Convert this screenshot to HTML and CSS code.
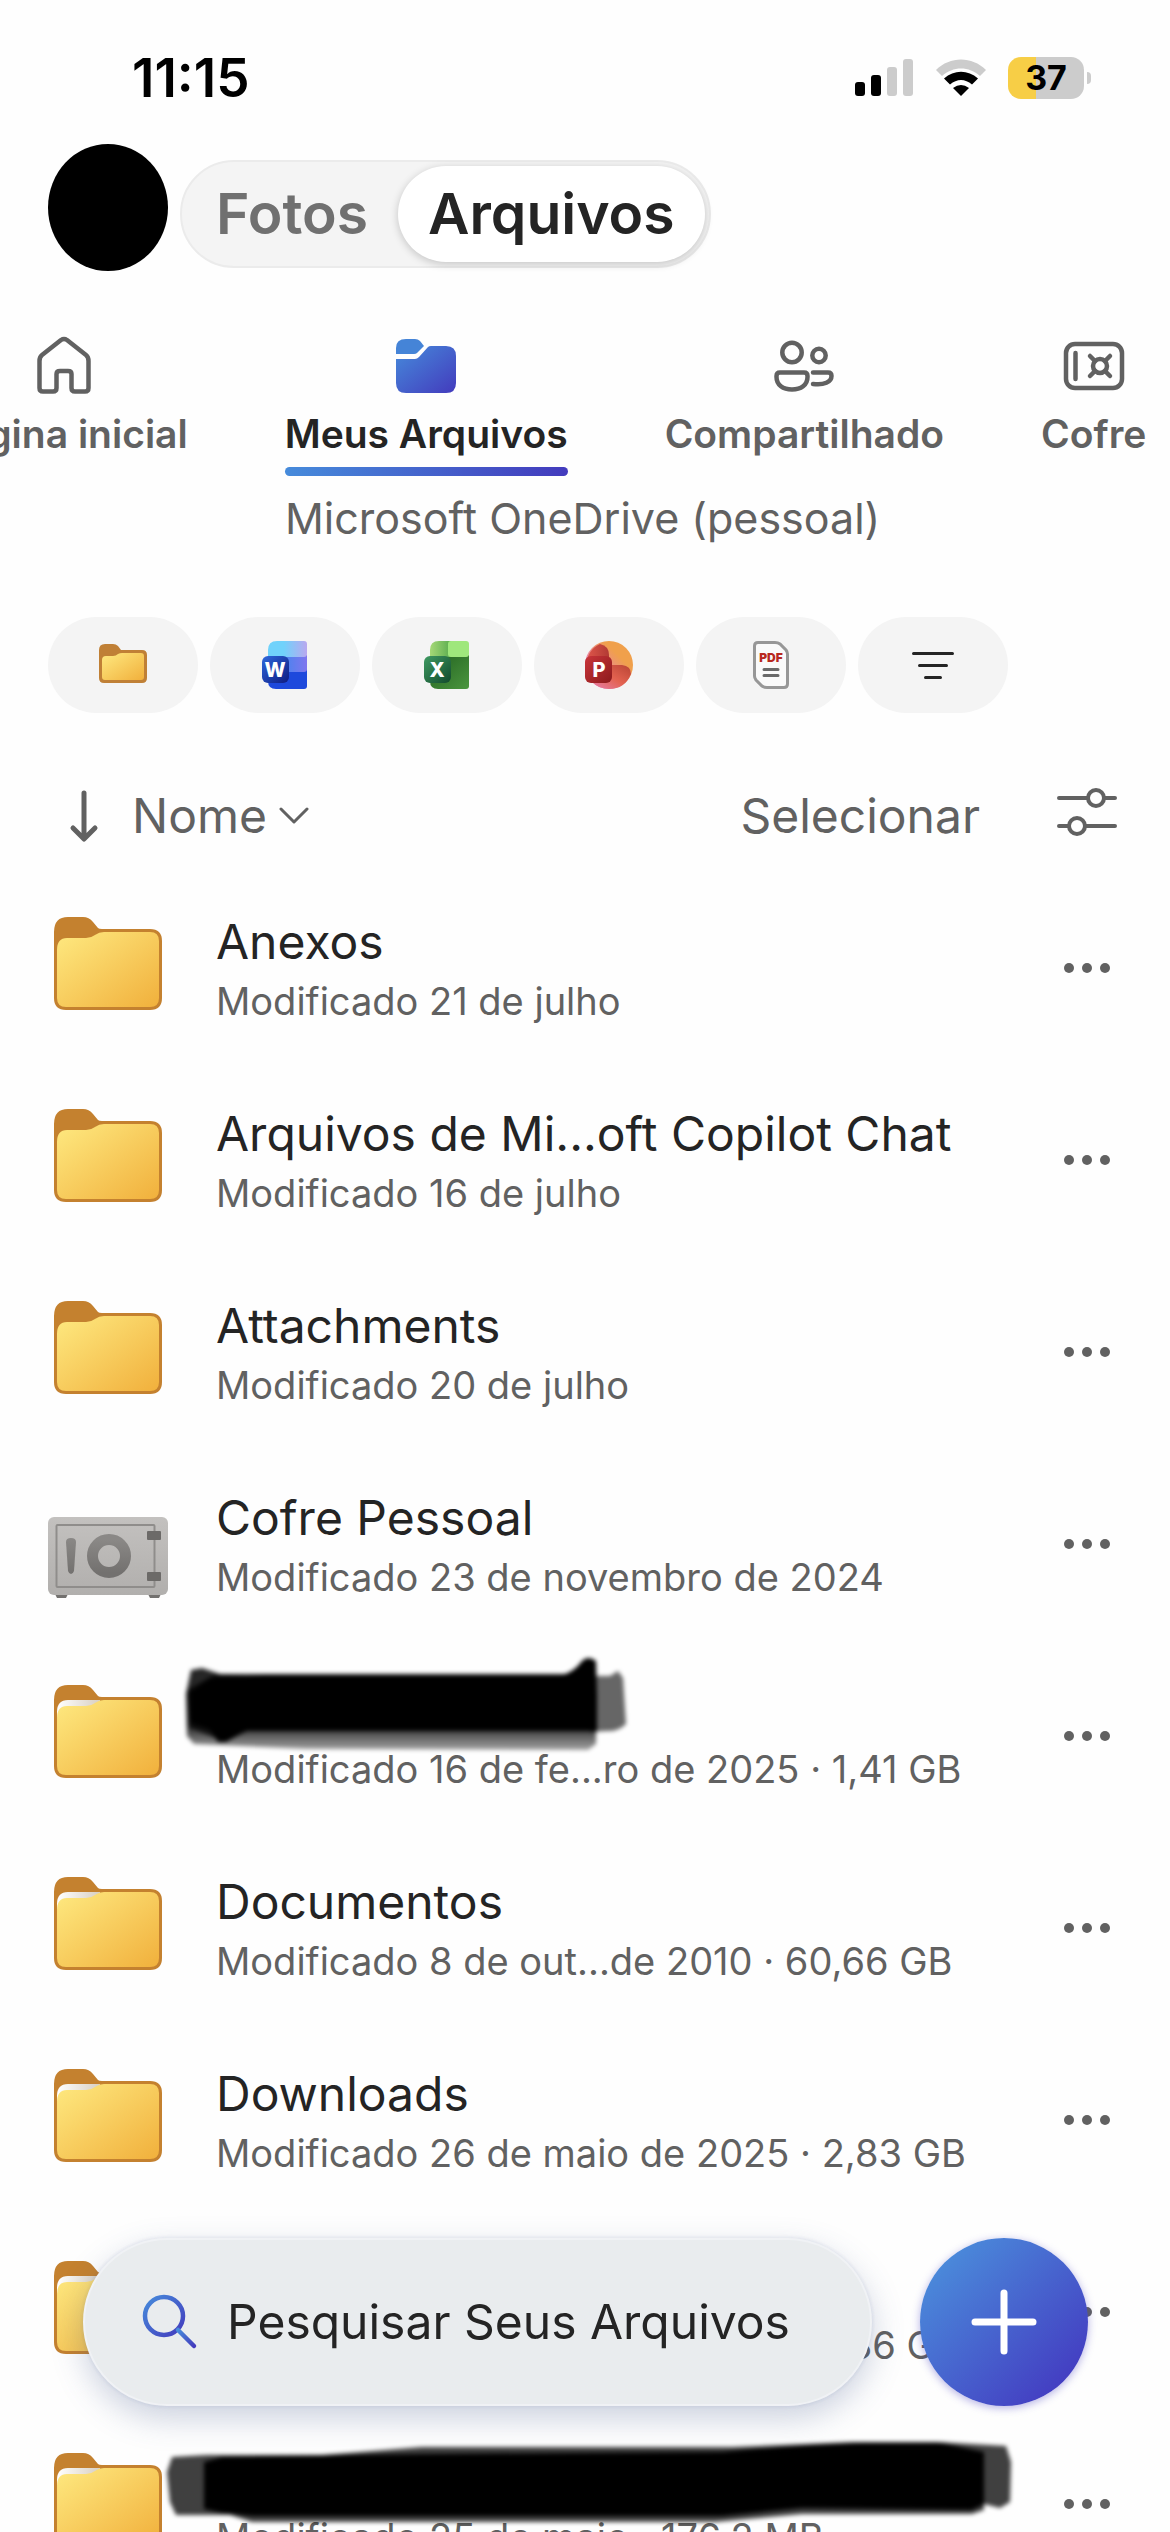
FILE: index.html
```html
<!DOCTYPE html>
<html lang="pt-br">
<head>
    <meta charset="UTF-8">
    <meta name="viewport" content="width=device-width, initial-scale=1.0">
    <title>Meus Arquivos</title>
    <link rel="stylesheet" href="styles.css">
</head>
<body>
    <!-- Formas reutilizadas -->
    <svg class="defs" aria-hidden="true">
        <defs>
            <linearGradient id="azul" x1="0" y1="0" x2="1" y2="1">
                <stop offset="0" stop-color="#468bdb"/>
                <stop offset="1" stop-color="#433bbd"/>
            </linearGradient>
            <linearGradient id="amarelo" x1="0" y1="0" x2="1" y2="1">
                <stop offset="0" stop-color="#fee980"/>
                <stop offset="1" stop-color="#f1b03c"/>
            </linearGradient>
            <linearGradient id="papel" x1="0" y1="0" x2="1" y2="0">
                <stop offset="0" stop-color="#fff"/>
                <stop offset="1" stop-color="#d8cfc2"/>
            </linearGradient>
            <linearGradient id="cinza" x1="0" y1="0" x2="0" y2="1">
                <stop offset="0" stop-color="#c3c1bf"/>
                <stop offset="1" stop-color="#b1afad"/>
            </linearGradient>
            <linearGradient id="cinzaEscuro" x1="0" y1="0" x2="0" y2="1">
                <stop offset="0" stop-color="#8a8886"/>
                <stop offset="1" stop-color="#73716f"/>
            </linearGradient>
            <linearGradient id="sombraRisco" x1="0" y1="0" x2="0" y2="1">
                <stop offset=".7" stop-color="#000" stop-opacity=".85"/>
                <stop offset="1" stop-color="#000" stop-opacity=".35"/>
            </linearGradient>
            <filter id="borrado" x="-5%" y="-20%" width="110%" height="140%">
                <feGaussianBlur stdDeviation="2"/>
            </filter>
        </defs>
        <symbol id="pasta" viewBox="0 0 120 120">
            <path fill="#c4812f" d="M6 24Q6 9 20 9H35Q41 9 45 14L50 20Q51 21 54 21H102Q114 21 114 33V90Q114 102 102 102H18Q6 102 6 90Z"/>
            <path fill="url(#amarelo)" d="M9 42Q9 30 19 30H38Q43 30 47 27Q51 24 56 24H102Q111 24 111 33V90Q111 99 102 99H18Q9 99 9 90Z"/>
        </symbol>
        <symbol id="pastaCheia" viewBox="0 0 120 120">
            <path fill="#c4812f" d="M6 24Q6 9 20 9H35Q41 9 45 14L50 20Q51 21 54 21H102Q114 21 114 33V90Q114 102 102 102H18Q6 102 6 90Z"/>
            <path fill="url(#papel)" d="M9 36Q9 24 20 24H52V44H9Z"/>
            <path fill="url(#amarelo)" d="M9 42Q9 30 19 30H38Q43 30 47 27Q51 24 56 24H102Q111 24 111 33V90Q111 99 102 99H18Q9 99 9 90Z"/>
        </symbol>
        <symbol id="mais" viewBox="0 0 48 12">
            <circle cx="6" cy="6" r="5"/><circle cx="24" cy="6" r="5"/><circle cx="42" cy="6" r="5"/>
        </symbol>
    </svg>

    <div class="app">
        <div class="status">
            <span class="hora">11:15</span>
            <div class="status-icones">
                <svg width="60" height="38" viewBox="0 0 60 38">
                    <rect x="1" y="23" width="10" height="14" rx="3"/>
                    <rect x="17" y="16" width="10" height="21" rx="3"/>
                    <rect x="33" y="8" width="10" height="29" rx="3" fill="#ccc"/>
                    <rect x="49" y="0" width="10" height="37" rx="3" fill="#ccc"/>
                </svg>
                <svg width="52" height="38" viewBox="0 0 52 38">
                    <path d="M1 11C15-3 37-3 51 11L45 17C34 7 18 7 7 17Z" fill="#ccc"/>
                    <path d="M9 19.500C19 10.500 33 10.500 43 19.500L37 25.500C30 19.500 22 19.500 15 25.500Z"/>
                    <path d="M18 29Q26 23 34 29L26 37Z"/>
                </svg>
                <div class="bateria"><span>37</span></div>
            </div>
        </div>

        <header class="cabecalho">
            <button class="avatar" aria-label="Conta"></button>
            <div class="segmento">
                <button class="segmento-item">Fotos</button>
                <button class="segmento-item ativo">Arquivos</button>
            </div>
        </header>

        <nav class="abas">
            <a class="aba" href="#">
                <svg class="aba-icone" viewBox="0 0 72 72">
                    <path d="M33 10L14 25Q11.500 27 11.500 31V58Q11.500 61.500 15 61.500H25Q28.500 61.500 28.500 58V44Q28.500 41 32 41H40Q43.500 41 43.500 44V58Q43.500 61.500 47 61.500H57Q60.500 61.500 60.500 58V31Q60.500 27 58 25L39 10Q36 8 33 10Z"/>
                </svg>
                <span>Página inicial</span>
            </a>
            <a class="aba ativa" href="#" aria-current="page">
                <svg class="aba-icone cheio" viewBox="0 0 72 72">
                    <path fill="#4584d7" d="M6 18Q6 9 16 9H25Q28 9 30 11L34 16L27 23Q26 24 24 24H6Z"/>
                    <path fill="url(#azul)" d="M6 29H25Q27 29 29 27L38 17Q39 16 41 16H56Q66 16 66 26V53Q66 63 56 63H16Q6 63 6 53Z"/>
                </svg>
                <span>Meus Arquivos</span>
            </a>
            <a class="aba" href="#">
                <svg class="aba-icone" viewBox="0 0 72 72">
                    <circle cx="24" cy="22.500" r="9.700"/>
                    <circle cx="51" cy="25.500" r="6.700"/>
                    <path d="M12 42.500H36Q39.500 42.500 39.500 46V47C39.500 55 33 59.500 24 59.500S8.500 55 8.500 47V46Q8.500 42.500 12 42.500Z"/>
                    <path d="M45 42.500H60Q63.500 42.500 63.500 46C63.500 52 56 55.500 45 54"/>
                </svg>
                <span>Compartilhado</span>
            </a>
            <a class="aba" href="#">
                <svg class="aba-icone" viewBox="0 0 72 72">
                    <rect x="8" y="14" width="56" height="44" rx="9"/>
                    <path d="M17.500 23V49M32 26L37 31M52 26L47 31M32 46L37 41M52 46L47 41"/>
                    <circle cx="42" cy="36" r="7"/>
                </svg>
                <span>Cofre</span>
            </a>
        </nav>
        <div class="conta">Microsoft OneDrive (pessoal)</div>

        <div class="filtros">
            <button class="filtro" aria-label="Pastas">
                <svg viewBox="0 0 48 48">
                    <path fill="#c08036" d="M0 9Q0 3 6 3H14Q17 3 19 5L22 9H43Q48 9 48 14V37Q48 42 43 42H5Q0 42 0 37Z"/>
                    <path fill="url(#amarelo)" d="M3 19Q3 15 7 15H14Q17 15 19 13Q21 12 23 12H42Q45 12 45 15V36Q45 39 42 39H6Q3 39 3 36Z"/>
                </svg>
            </button>
            <button class="filtro" aria-label="Word">
                <svg viewBox="0 0 48 48">
                    <defs>
                        <linearGradient id="w1"><stop offset=".4" stop-color="#70d2fb"/><stop offset="1" stop-color="#b9a8ef"/></linearGradient>
                        <linearGradient id="w2"><stop offset=".3" stop-color="#3f86ee"/><stop offset="1" stop-color="#8076ee"/></linearGradient>
                        <linearGradient id="w3" x1="0" y1="0" x2="1" y2="1"><stop offset="0" stop-color="#2d68dc"/><stop offset="1" stop-color="#0f1a80"/></linearGradient>
                    </defs>
                    <path fill="#1e49dc" d="M7 16H46V45Q46 48 43 48H15Q7 48 7 40Z"/>
                    <path fill="url(#w2)" d="M7 14H46V28Q46 31 43 31H7Z"/>
                    <path fill="url(#w1)" d="M7 9Q7 0 16 0H43Q46 0 46 3V13Q46 16 43 16H7Z"/>
                    <rect x="1" y="15" width="27" height="27" rx="6" fill="url(#w3)"/>
                    <text class="letra" x="14" y="36">W</text>
                </svg>
            </button>
            <button class="filtro" aria-label="Excel">
                <svg viewBox="0 0 48 48">
                    <defs>
                        <linearGradient id="x1"><stop offset="0" stop-color="#a5d877"/><stop offset="1" stop-color="#54a94b"/></linearGradient>
                        <linearGradient id="x2" x1="0" y1="0" x2="1" y2="1"><stop offset="0" stop-color="#22601f"/><stop offset="1" stop-color="#4b963f"/></linearGradient>
                        <linearGradient id="x3" x1="0" y1="0" x2="1" y2="1"><stop offset="0" stop-color="#3f9a62"/><stop offset="1" stop-color="#124a2c"/></linearGradient>
                    </defs>
                    <path fill="url(#x2)" d="M7 14H46V45Q46 48 43 48H15Q7 48 7 40Z"/>
                    <path fill="url(#x1)" d="M7 9Q7 0 16 0H30V16H7Z"/>
                    <rect x="25" y="0" width="21" height="16" rx="3" fill="#9fe77c"/>
                    <rect x="1" y="15" width="27" height="27" rx="6" fill="url(#x3)"/>
                    <text class="letra" x="14" y="36">X</text>
                </svg>
            </button>
            <button class="filtro" aria-label="PowerPoint">
                <svg viewBox="0 0 48 48">
                    <defs>
                        <linearGradient id="p1" x1="0" y1="1" x2="1" y2="0"><stop offset=".3" stop-color="#e77fb5"/><stop offset=".7" stop-color="#f0a04b"/></linearGradient>
                        <linearGradient id="p2" x1="0" y1="0" x2="1" y2="1"><stop offset="0" stop-color="#c9353a"/><stop offset="1" stop-color="#8c1a1c"/></linearGradient>
                        <linearGradient id="p3" x1="1" y1="0" x2="0" y2="1"><stop offset="0" stop-color="#b94434"/><stop offset=".5" stop-color="#e36250"/><stop offset="1" stop-color="#e67fae"/></linearGradient>
                        <linearGradient id="p4"><stop offset="0" stop-color="#e0574b"/><stop offset="1" stop-color="#b23a34"/></linearGradient>
                    </defs>
                    <circle cx="24" cy="24" r="24" fill="url(#p1)"/>
                    <path fill="url(#p3)" d="M24 24H37Q46 25 46 33Q40 48 24 48Q14 48 7 41L14 24Z"/>
                    <path fill="url(#p4)" d="M1 24Q3 8 15 3Q24 5 24 14V26H1Z"/>
                    <rect x="0" y="15" width="27" height="27" rx="6" fill="url(#p2)"/>
                    <text class="letra" x="14" y="36">P</text>
                </svg>
            </button>
            <button class="filtro" aria-label="PDF">
                <svg viewBox="0 0 48 48">
                    <path fill="#fafafa" stroke="#979797" stroke-width="3" d="M7.500 5Q7.500 1.500 11 1.500H28Q31 1.500 33 3L39 9Q40.500 11 40.500 13V43Q40.500 46.500 37 46.500H20Q17 46.500 15 45L9 39Q7.500 37 7.500 35Z"/>
                    <text class="letra-pdf" x="24" y="21">PDF</text>
                    <path stroke="#6a6a6a" stroke-width="3" stroke-linecap="round" d="M17 28.500H31M17 34.500H31"/>
                </svg>
            </button>
            <button class="filtro" aria-label="Mais filtros">
                <svg viewBox="0 0 48 48">
                    <path stroke="#242424" stroke-width="3" stroke-linecap="round" d="M4.500 12.500H43.500M10.500 24.500H37.500M16.500 36.500H31.500"/>
                </svg>
            </button>
        </div>

        <div class="ordenacao">
            <button class="ordenar">
                <svg width="72" height="60" viewBox="0 0 72 60">
                    <path class="traco" stroke-width="5" d="M36 7V52M25 42L36 53L47 42"/>
                </svg>
                Nome
                <svg width="30" height="24" viewBox="0 0 30 24">
                    <path class="traco" stroke-width="3" d="M2 5L15 18L28 5"/>
                </svg>
            </button>
            <button class="selecionar">Selecionar</button>
            <button class="ajustes" aria-label="Opções de exibição">
                <svg width="62" height="60" viewBox="0 0 62 60">
                    <path class="traco" stroke-width="4" d="M3 12H31M49 12H59M3 40H12M30 40H59"/>
                    <circle class="traco" stroke-width="4" cx="40" cy="12" r="8"/>
                    <circle class="traco" stroke-width="4" cx="21" cy="40" r="8"/>
                </svg>
            </button>
        </div>

        <ul class="lista">
            <li class="item">
                <svg class="item-icone"><use href="#pasta"/></svg>
                <div class="item-texto">
                    <div class="nome">Anexos</div>
                    <div class="detalhe">Modificado 21 de julho</div>
                </div>
                <button class="opcoes" aria-label="Opções"><svg><use href="#mais"/></svg></button>
            </li>
            <li class="item">
                <svg class="item-icone"><use href="#pasta"/></svg>
                <div class="item-texto">
                    <div class="nome">Arquivos de Mi...oft Copilot Chat</div>
                    <div class="detalhe">Modificado 16 de julho</div>
                </div>
                <button class="opcoes" aria-label="Opções"><svg><use href="#mais"/></svg></button>
            </li>
            <li class="item">
                <svg class="item-icone"><use href="#pasta"/></svg>
                <div class="item-texto">
                    <div class="nome">Attachments</div>
                    <div class="detalhe">Modificado 20 de julho</div>
                </div>
                <button class="opcoes" aria-label="Opções"><svg><use href="#mais"/></svg></button>
            </li>
            <li class="item">
                <svg class="item-icone" viewBox="0 0 120 120">
                    <path fill="#73716f" d="M7 110H20L18 114H9ZM100 110H113L111 114H102Z"/>
                    <rect x="0" y="33" width="120" height="78" rx="6" fill="url(#cinza)"/>
                    <rect x="8.500" y="41" width="98" height="62" rx="1" fill="none" stroke="#8f8d8b" stroke-width="2"/>
                    <path fill="url(#cinzaEscuro)" d="M18 58Q18 54 23 54T28 58L26 87Q25 90 23 90T20 87Z"/>
                    <circle cx="61" cy="72" r="16.500" fill="none" stroke="url(#cinzaEscuro)" stroke-width="11"/>
                    <rect x="99" y="47" width="14" height="9" rx="1" fill="#6c6a68"/>
                    <rect x="99" y="88" width="14" height="9" rx="1" fill="#6c6a68"/>
                </svg>
                <div class="item-texto">
                    <div class="nome">Cofre Pessoal</div>
                    <div class="detalhe">Modificado 23 de novembro de 2024</div>
                </div>
                <button class="opcoes" aria-label="Opções"><svg><use href="#mais"/></svg></button>
            </li>
            <li class="item">
                <svg class="item-icone"><use href="#pastaCheia"/></svg>
                <div class="item-texto">
                    <div class="nome"></div>
                    <div class="detalhe">Modificado 16 de fe...ro de 2025 · 1,41 GB</div>
                </div>
                <svg class="risco risco-curto" viewBox="0 0 440 96" aria-hidden="true">
                    <g filter="url(#borrado)">
                        <path fill="url(#sombraRisco)" d="M0 38L5 14L16 12L34 18H400L410 40V88L402 94L120 93L8 88L1 80Z"/>
                        <path opacity=".6" d="M404 20L424 20L432 15L437 22L440 68Q432 76 420 75L404 76Z"/>
                        <path opacity=".7" d="M1 34L30 18L60 20V76L34 84L4 72Z"/>
                        <path d="M24 22L80 19H376Q388 16 396 5Q402-1 410 5L411 40L411 75H60L40 86L32 86L24 74L4 66V36Z"/>
                    </g>
                </svg>
                <button class="opcoes" aria-label="Opções"><svg><use href="#mais"/></svg></button>
            </li>
            <li class="item">
                <svg class="item-icone"><use href="#pastaCheia"/></svg>
                <div class="item-texto">
                    <div class="nome">Documentos</div>
                    <div class="detalhe">Modificado 8 de out...de 2010 · 60,66 GB</div>
                </div>
                <button class="opcoes" aria-label="Opções"><svg><use href="#mais"/></svg></button>
            </li>
            <li class="item">
                <svg class="item-icone"><use href="#pastaCheia"/></svg>
                <div class="item-texto">
                    <div class="nome">Downloads</div>
                    <div class="detalhe">Modificado 26 de maio de 2025 · 2,83 GB</div>
                </div>
                <button class="opcoes" aria-label="Opções"><svg><use href="#mais"/></svg></button>
            </li>
            <li class="item">
                <svg class="item-icone"><use href="#pastaCheia"/></svg>
                <div class="item-texto">
                    <div class="nome">Imagens</div>
                    <div class="detalhe">Modificado 8 de out...de 2020 · 20,36 GB</div>
                </div>
                <button class="opcoes" aria-label="Opções"><svg><use href="#mais"/></svg></button>
            </li>
            <li class="item">
                <svg class="item-icone"><use href="#pastaCheia"/></svg>
                <div class="item-texto">
                    <div class="nome"></div>
                    <div class="detalhe">Modificado 25 de maio · 176,2 MB</div>
                </div>
                <svg class="risco risco-longo" viewBox="0 0 850 84" aria-hidden="true">
                    <g filter="url(#borrado)">
                        <path opacity=".75" d="M5 30L10 15L45 13H160L260 5H570L690 0H775L844 4L849 20L848 60L838 66L822 62V68L810 72H640L553 80H90L68 73L14 73L8 60Z"/>
                        <path d="M42 20L60 15L260 12L560 10Q640 3 700 1H780L822 10V62L810 68L640 66L560 74H90L60 71L42 67Z"/>
                    </g>
                </svg>
                <button class="opcoes" aria-label="Opções"><svg><use href="#mais"/></svg></button>
            </li>
        </ul>
    </div>

    <div class="barra-inferior">
        <label class="busca">
            <svg width="60" height="60" viewBox="0 0 60 60">
                <g fill="none" stroke="url(#azul)" stroke-width="4.500" stroke-linecap="round">
                    <circle cx="23" cy="24" r="19"/>
                    <path d="M37 38L53 54"/>
                </g>
            </svg>
            <input type="search" placeholder="Pesquisar Seus Arquivos" aria-label="Pesquisar Seus Arquivos">
        </label>
        <button class="adicionar" aria-label="Adicionar">
            <svg width="66" height="66" viewBox="0 0 66 66">
                <path stroke="#fff" stroke-width="7" stroke-linecap="round" d="M33 4V62M4 33H62"/>
            </svg>
        </button>
    </div>
</body>
</html>
```

FILE: styles.css
```css
* {
    box-sizing: border-box;
}

body {
    font-family: 'Inter', 'Liberation Sans', sans-serif;
    color: #242424;
    margin: 0;
    background-color: #fefefe;
}

button, input {
    font: inherit;
    color: inherit;
    background: none;
    border: none;
    padding: 0;
    margin: 0;
}

button {
    cursor: pointer;
}

svg {
    flex-shrink: 0;
}

.defs {
    position: absolute;
    width: 0;
    height: 0;
}

.app {
    display: flex;
    flex-direction: column;
    height: 100vh;
    overflow: hidden;
}

/* Barra de status */
.status {
    display: flex;
    justify-content: space-between;
    align-items: center;
    height: 144px;
    padding: 12px 86px 0 132px;
    color: #000;
    flex-shrink: 0;
}

.hora {
    font-size: 53px;
    font-weight: 600;
}

.status-icones {
    display: flex;
    align-items: center;
    gap: 21px;
}

.bateria {
    position: relative;
    width: 76px;
    height: 42px;
    border-radius: 13px;
    background: linear-gradient(90deg, #f7ce46 37%, #ccc 37%);
    font-size: 34px;
    font-weight: 700;
    line-height: 42px;
    text-align: center;
}

.bateria::after {
    content: "";
    position: absolute;
    right: -7px;
    top: 15px;
    width: 4px;
    height: 12px;
    border-radius: 0 4px 4px 0;
    background: #ccc;
}

/* Topo */
.cabecalho {
    display: flex;
    align-items: center;
    gap: 12px;
    padding: 0 48px;
    flex-shrink: 0;
}

.avatar {
    width: 120px;
    height: 127px;
    border-radius: 50%;
    background: #000;
}

.segmento {
    display: flex;
    margin-top: 12px;
    height: 108px;
    padding: 4px;
    border: 2px solid #ebebeb;
    border-radius: 54px;
    background: #f4f4f4;
}

.segmento-item {
    padding: 0 30px;
    border-radius: 48px;
    font-size: 57px;
    font-weight: 600;
    color: #707070;
}

.segmento-item.ativo {
    background: #fff;
    color: #242424;
    box-shadow: 0 2px 8px rgba(0, 0, 0, 0.2);
}

/* Abas */
.abas {
    display: flex;
    gap: 97px;
    margin-left: -60px;
    padding-top: 59px;
    flex-shrink: 0;
}

.aba {
    display: flex;
    flex-direction: column;
    align-items: center;
    font-size: 39px;
    font-weight: 600;
    line-height: 48px;
    color: #616161;
    text-decoration: none;
    white-space: nowrap;
}

.aba-icone {
    width: 72px;
    height: 72px;
    margin-bottom: 8px;
    fill: none;
    stroke: #616161;
    stroke-width: 4.5px;
    stroke-linecap: round;
    stroke-linejoin: round;
}

.aba-icone.cheio {
    stroke: none;
}

.aba::after {
    content: "";
    align-self: stretch;
    height: 9px;
    margin-top: 9px;
    border-radius: 5px;
}

.aba.ativa {
    color: #242424;
}

.aba.ativa::after {
    background: linear-gradient(90deg, #468bdb, #433bbd);
}

.conta {
    margin-top: 14px;
    padding-left: 285px;
    font-size: 43px;
    line-height: 56px;
    color: #616161;
    white-space: nowrap;
}

/* Filtros */
.filtros {
    display: flex;
    gap: 12px;
    margin-top: 71px;
    padding: 0 48px;
    flex-shrink: 0;
}

.filtro {
    display: flex;
    align-items: center;
    justify-content: center;
    width: 150px;
    height: 96px;
    border-radius: 48px;
    background: #f4f4f4;
}

.filtro svg {
    width: 48px;
    height: 48px;
}

.letra {
    fill: #fff;
    font-size: 20px;
    font-weight: 800;
    text-anchor: middle;
}

.letra-pdf {
    fill: #b8281f;
    font-size: 12px;
    font-weight: 900;
    text-anchor: middle;
}

/* Ordenação */
.ordenacao {
    display: flex;
    align-items: center;
    margin: 73px 52px 26px 48px;
    font-size: 48px;
    line-height: 60px;
    color: #616161;
    flex-shrink: 0;
}

.ordenar {
    display: flex;
    align-items: center;
    gap: 12px;
}

.selecionar {
    margin-left: auto;
    margin-right: 76px;
}

.ajustes {
    display: flex;
}

.traco {
    fill: none;
    stroke: #616161;
    stroke-linecap: round;
    stroke-linejoin: round;
}

/* Lista de arquivos */
.lista {
    flex: 1;
    min-height: 0;
    margin: 0;
    padding: 0;
    list-style: none;
    overflow: hidden;
}

.item {
    position: relative;
    display: flex;
    align-items: center;
    gap: 48px;
    padding: 40px 59px 40px 48px;
}

.item-icone {
    width: 120px;
    height: 120px;
    margin: -4px 0;
}

.item-texto {
    flex: 1;
    min-width: 0;
    white-space: nowrap;
}

.nome {
    height: 60px;
    font-size: 48px;
    line-height: 60px;
}

.detalhe {
    margin-top: 6px;
    font-size: 38px;
    line-height: 46px;
    color: #616161;
}

.opcoes {
    display: flex;
}

.opcoes svg {
    width: 48px;
    height: 12px;
    fill: #616161;
}

/* Rabiscos por cima dos nomes */
.risco {
    position: absolute;
    overflow: visible;
}

.risco-curto {
    left: 186px;
    top: 16px;
    width: 440px;
    height: 96px;
}

.risco-longo {
    left: 162px;
    top: 34px;
    width: 850px;
    height: 84px;
}

/* Busca e botão flutuante */
.barra-inferior {
    position: fixed;
    left: 83px;
    right: 82px;
    bottom: 126px;
    display: flex;
    gap: 48px;
}

.busca {
    flex: 1;
    min-width: 0;
    display: flex;
    align-items: center;
    gap: 26px;
    height: 168px;
    padding: 0 56px;
    border-radius: 84px;
    border: 2px solid #f0f2f5;
    background: #e9ecee;
    box-shadow: 0 12px 32px rgba(70, 90, 140, 0.28), 0 0 4px rgba(70, 90, 140, 0.15);
}

.busca input {
    flex: 1;
    min-width: 0;
    font-size: 48px;
    line-height: 60px;
    outline: none;
}

.busca input::placeholder {
    color: #242424;
    opacity: 1;
}

.adicionar {
    display: flex;
    align-items: center;
    justify-content: center;
    flex-shrink: 0;
    width: 168px;
    height: 168px;
    border-radius: 50%;
    background: linear-gradient(135deg, #4b8fdc 8%, #4338c0 92%);
    box-shadow: 0 2px 8px rgba(67, 59, 189, 0.4);
}
```
